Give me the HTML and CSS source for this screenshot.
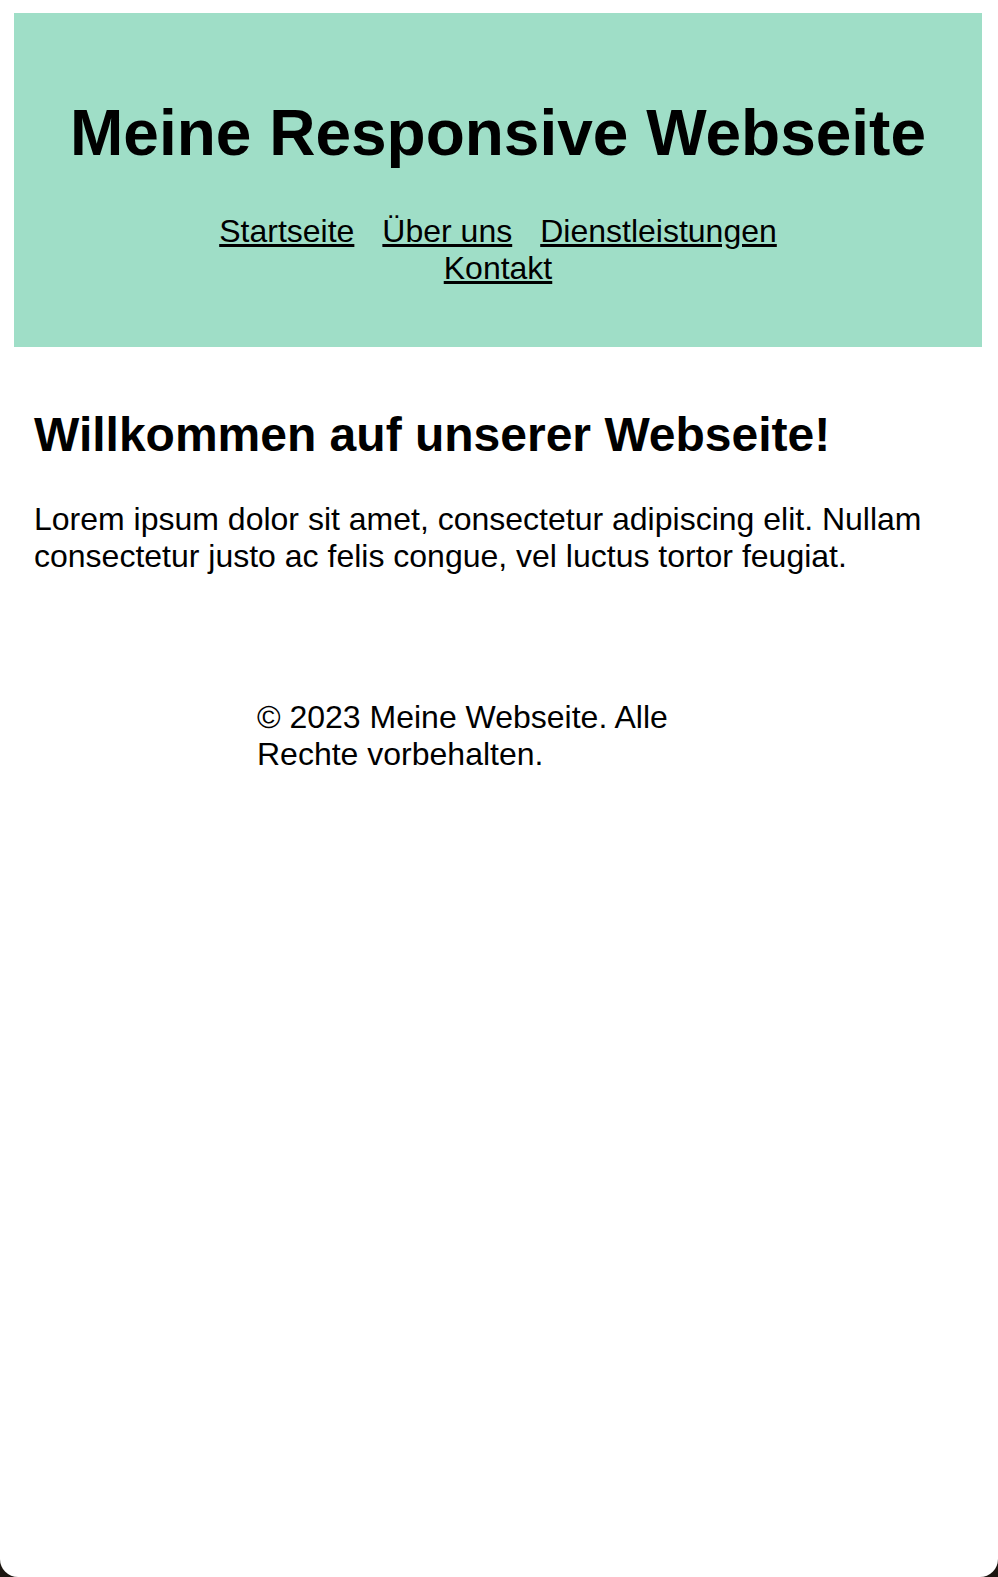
FILE: index.html
```html
<!DOCTYPE html>
<html lang="de">
<head>
<meta charset="utf-8">
<title>Meine Responsive Webseite</title>
<link rel="stylesheet" href="styles.css">
</head>
<body>
<div class="page">
  <header class="site-header">
    <h1 class="site-title">Meine Responsive Webseite</h1>
    <nav class="site-nav">
      <ul class="nav-list">
        <li class="nav-item"><a href="#" class="nav-link">Startseite</a></li>
        <li class="nav-item"><a href="#" class="nav-link">Über uns</a></li>
        <li class="nav-item"><a href="#" class="nav-link">Dienstleistungen</a></li>
        <li class="nav-item"><a href="#" class="nav-link">Kontakt</a></li>
      </ul>
    </nav>
  </header>
  <main class="content">
    <h2 class="content-title">Willkommen auf unserer Webseite!</h2>
    <p class="content-text">Lorem ipsum dolor sit amet, consectetur adipiscing elit. Nullam consectetur justo ac felis congue, vel luctus tortor feugiat.</p>
  </main>
  <footer class="site-footer">
    <p class="footer-text">© 2023 Meine Webseite. Alle Rechte vorbehalten.</p>
  </footer>
</div>
</body>
</html>
```

FILE: styles.css
```css
html {
  background: #1b1510;
}
body {
  margin: 0;
  font-family: "Liberation Sans", Arial, sans-serif;
  font-size: 32px;
  color: #000;
}
.page {
  background: #fff;
  min-height: 100vh;
  box-sizing: border-box;
  padding-top: 13px;
  border-radius: 0 0 18px 18px;
  overflow: hidden;
}
.site-header {
  margin: 0 16px 0 14px;
  background: #9fdec7;
  text-align: center;
  padding: 40px 20px 60px;
}
.site-title {
  font-size: 64px;
  font-weight: bold;
  margin: 43px 0;
  line-height: normal;
}
.nav-list {
  list-style: none;
  margin: 0 auto;
  padding: 0;
  max-width: 680px;
  display: flex;
  flex-wrap: wrap;
  justify-content: center;
}
.nav-item {
  margin: 0 14px;
}
.nav-link {
  color: #000;
  text-decoration: underline;
}
.content {
  padding: 20px 34px 16px;
}
.content-title {
  font-size: 48px;
  font-weight: bold;
  margin: 40px 0 39px;
  line-height: normal;
}
.content-text {
  margin: 32px 0;
  line-height: normal;
}
.site-footer {
  width: 484px;
  margin: 0 auto;
  padding-top: 76px;
}
.footer-text {
  margin: 0;
  line-height: normal;
}
```
